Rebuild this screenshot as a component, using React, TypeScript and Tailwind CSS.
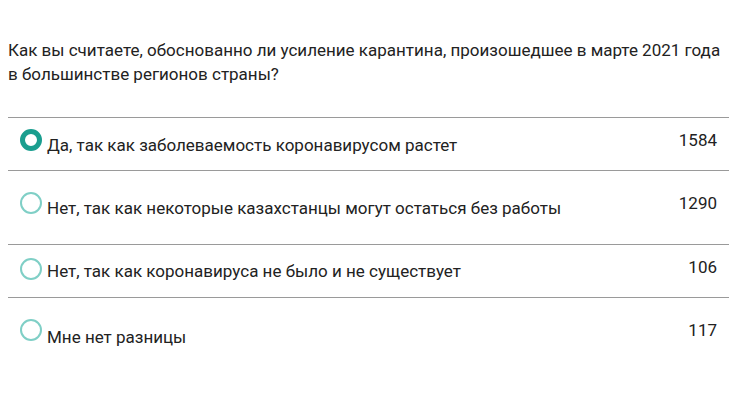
const options = [
  { label: "Да, так как заболеваемость коронавирусом растет", votes: 1584, selected: true, row: "h-[53px]", dot: "mt-[11px]", text: "mt-[15px]", num: "mt-[12px]" },
  { label: "Нет, так как некоторые казахстанцы могут остаться без работы", votes: 1290, selected: false, row: "h-[74px]", dot: "mt-[21px]", text: "mt-[25px]", num: "mt-[22px]" },
  { label: "Нет, так как коронавируса не было и не существует", votes: 106, selected: false, row: "h-[53px]", dot: "mt-[13px]", text: "mt-[14px]", num: "mt-[12px]" },
  { label: "Мне нет разницы", votes: 117, selected: false, row: "h-[90px]", dot: "mt-[21px]", text: "mt-[27px]", num: "mt-[22px]" },
];

export default function App() {
  return (
    <div className="h-[401px] w-[740px] bg-white px-2 pt-[38px] font-['Roboto',sans-serif] text-[#222]">
      <p className="text-[17px] leading-[24px]">
        Как вы считаете, обоснованно ли усиление карантина, произошедшее в марте 2021 года
        <br />в большинстве регионов страны?
      </p>
      <div className="mt-[31px] w-[721px]">
        {options.map((o, i) => (
          <div
            key={i}
            className={`flex justify-between border-t border-[#9a9a9a] pl-3 pr-3 ${o.row}`}
          >
            <div className="flex items-start">
              <span
                className={`block h-[22px] w-[22px] shrink-0 rounded-full ${o.dot} ${
                  o.selected ? "border-[5px] border-[#1a9e8f]" : "border-2 border-[#7fcfc6]"
                }`}
              />
              <span className={`ml-[5px] text-[17px] leading-[24px] ${o.text}`}>{o.label}</span>
            </div>
            <span className={`text-[17px] leading-[20px] ${o.num}`}>{o.votes}</span>
          </div>
        ))}
      </div>
    </div>
  );
}
